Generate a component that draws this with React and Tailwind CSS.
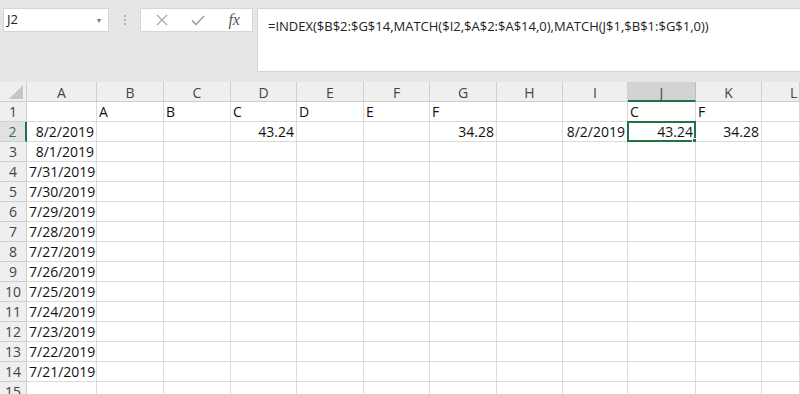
import React from "react";

const cols = ["A", "B", "C", "D", "E", "F", "G", "H", "I", "J", "K", "L"];
const gridCols =
  "grid grid-cols-[27px_70px_67px_67px_66px_67px_66px_67px_66px_65px_68px_66px_1fr]";

const dates = [
  "8/1/2019",
  "7/31/2019",
  "7/30/2019",
  "7/29/2019",
  "7/28/2019",
  "7/27/2019",
  "7/26/2019",
  "7/25/2019",
  "7/24/2019",
  "7/23/2019",
  "7/22/2019",
  "7/21/2019",
];

function rowData(r) {
  const d = {};
  if (r === 1) {
    Object.assign(d, {
      B: ["A", "l"],
      C: ["B", "l"],
      D: ["C", "l"],
      E: ["D", "l"],
      F: ["E", "l"],
      G: ["F", "l"],
      J: ["C", "l"],
      K: ["F", "l"],
    });
  } else if (r === 2) {
    Object.assign(d, {
      A: ["8/2/2019", "r"],
      D: ["43.24", "r"],
      G: ["34.28", "r"],
      I: ["8/2/2019", "r"],
      J: ["43.24", "r"],
      K: ["34.28", "r"],
    });
  } else if (r <= 14) {
    d.A = [dates[r - 3], "r"];
  }
  return d;
}

function Cell({ v, selected }) {
  return (
    <div
      className={`relative h-[20px] border-r border-b border-[#dadada] bg-white text-[14px] leading-[20px] text-[#111] px-[2px] overflow-visible whitespace-nowrap ${
        v && v[1] === "r" ? "text-right" : "text-left"
      }`}
    >
      {v ? v[0] : ""}
      {selected && (
        <div className="absolute left-[-1px] top-[-1px] right-[-1px] bottom-[-1px] border-2 border-[#217346] pointer-events-none">
          <div className="absolute right-[-4px] bottom-[-4px] w-[6px] h-[6px] bg-[#217346] border border-white" />
        </div>
      )}
    </div>
  );
}

export default function App() {
  const rows = Array.from({ length: 15 }, (_, i) => i + 1);
  return (
    <div
      className="w-[800px] h-[394px] overflow-hidden bg-[#e6e6e6]"
      style={{ fontFamily: '"Open Sans", "Noto Sans", sans-serif' }}
    >
      {/* Formula bar area */}
      <div className="h-[82px] flex items-start pt-[8px] pl-[3px]">
        <div className="w-[106px] h-[24px] bg-white border border-[#d6d6d6] flex items-center justify-between pl-[3px] pr-[7px]">
          <span className="text-[13px] text-[#222]">J2</span>
          <span className="text-[8px] text-[#777] leading-none">▾</span>
        </div>
        <div className="w-[31px] h-[24px] flex flex-col items-center justify-center gap-[2px]">
          <span className="w-[2px] h-[2px] bg-[#b5b5b5]" />
          <span className="w-[2px] h-[2px] bg-[#b5b5b5]" />
          <span className="w-[2px] h-[2px] bg-[#b5b5b5]" />
        </div>
        <div className="w-[113px] h-[24px] bg-white border border-[#d6d6d6] flex items-center">
          <div className="w-[38px] flex justify-center pl-[4px]">
            <svg width="12" height="12" viewBox="0 0 12 12">
              <path d="M1 1 L11 11 M11 1 L1 11" stroke="#a8a8a8" strokeWidth="1.3" fill="none" />
            </svg>
          </div>
          <div className="w-[38px] flex justify-center">
            <svg width="14" height="12" viewBox="0 0 14 12">
              <path d="M1 6.5 L5 10.5 L13 2" stroke="#a8a8a8" strokeWidth="1.8" fill="none" />
            </svg>
          </div>
          <div className="w-[36px] flex justify-center">
            <span
              className="italic text-[16px] text-[#555] leading-none"
              style={{ fontFamily: '"Liberation Serif", serif' }}
            >
              fx
            </span>
          </div>
        </div>
        <div className="ml-[4px] flex-1 h-[64px] bg-white border-l border-t border-b border-[#d6d6d6] pl-[10px] pt-[4px]">
          <span className="text-[13px] text-[#222] whitespace-nowrap">
            =INDEX($B$2:$G$14,MATCH($I2,$A$2:$A$14,0),MATCH(J$1,$B$1:$G$1,0))
          </span>
        </div>
      </div>

      {/* Sheet */}
      <div className={gridCols}>
        {/* Header row */}
        <div className="h-[20px] bg-[#efefef] border-r border-b border-[#cfcfcf] flex items-end justify-end pr-[3px] pb-[2px]">
          <svg width="14" height="14" viewBox="0 0 14 14">
            <path d="M14 0 L14 14 L0 14 Z" fill="#c6c6c6" />
          </svg>
        </div>
        {cols.map((c) => (
          <div
            key={c}
            className={`h-[20px] text-[14px] leading-[21px] text-center border-r ${
              c === "J"
                ? "bg-[#d3d3d3] text-[#2b5e3e] border-b-2 border-b-[#217346] border-r-[#bdbdbd]"
                : "bg-[#efefef] text-[#444] border-b border-[#cfcfcf]"
            } ${c === "L" ? "text-left pl-[28px]" : ""}`}
          >
            {c}
          </div>
        ))}

        {rows.map((r) => {
          const d = rowData(r);
          return (
            <React.Fragment key={r}>
              <div
                className={`h-[20px] text-[14px] leading-[20px] text-center border-b border-[#cfcfcf] ${
                  r === 2
                    ? "bg-[#e1e1e1] text-[#3a6b4b] border-r-2 border-r-[#217346]"
                    : "bg-[#efefef] text-[#444] border-r border-r-[#cfcfcf]"
                }`}
              >
                {r}
              </div>
              {cols.map((c) => (
                <Cell key={c} v={d[c]} selected={r === 2 && c === "J"} />
              ))}
            </React.Fragment>
          );
        })}
      </div>
    </div>
  );
}
